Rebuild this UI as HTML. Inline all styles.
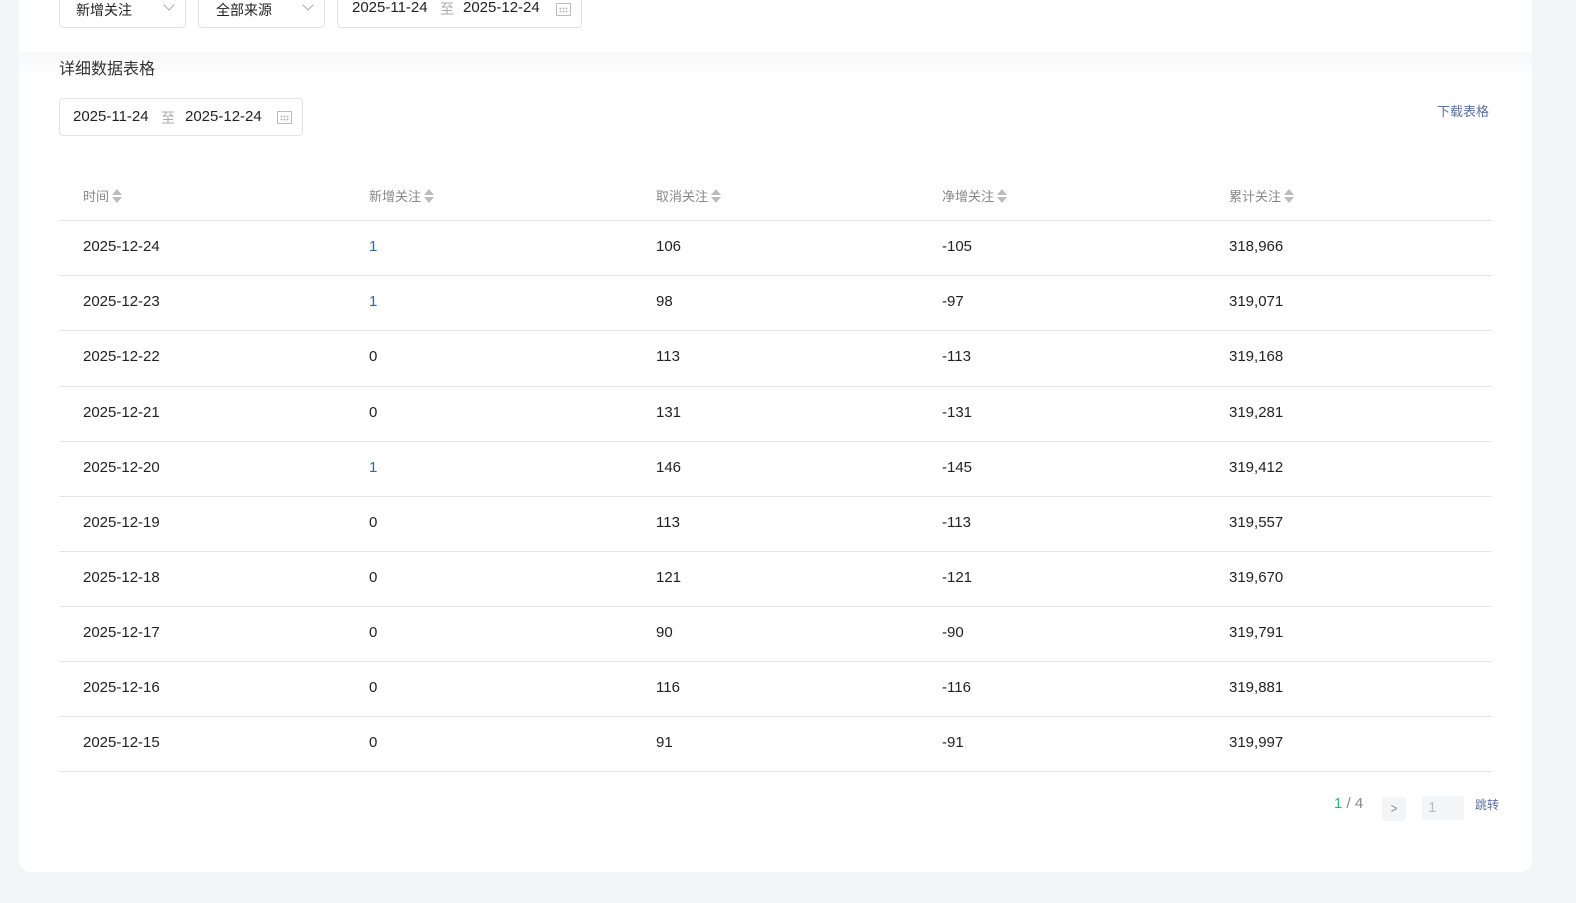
<!DOCTYPE html>
<html><head><meta charset="utf-8">
<style>
*{margin:0;padding:0;box-sizing:border-box}
body{width:1576px;height:903px;background:#f4f5f7;font-family:"Liberation Sans","Noto Sans CJK SC",sans-serif;position:relative;overflow:hidden;color:#222}
.card{position:absolute;left:19px;top:-20px;width:1513px;height:892px;background:#fff;border-radius:0 0 12px 12px}
.band{position:absolute;left:19px;top:52px;width:1513px;height:26px;background:linear-gradient(#f7f7f8,#fff)}
.abs{position:absolute}
.box{position:absolute;border:1px solid #e3e3e6;border-radius:4px;background:#fff;font-size:15px;color:#222}
.chev{position:absolute;width:8px;height:8px;border-right:1.3px solid #aaa;border-bottom:1.3px solid #aaa;transform:rotate(45deg)}
.cal{position:absolute;width:15px;height:13px;border:1.3px solid #bbb;border-radius:1px}
.cal:before{content:"";position:absolute;left:2px;top:3px;width:9px;height:6px;background:radial-gradient(circle,#bbb 0.8px,transparent 1px) 0 0/3px 3px}
.th{position:absolute;top:186px;font-size:13px;color:#888}
.sort{display:inline-block;width:10px;height:15px;vertical-align:-3px;margin-left:3px;position:relative}
.sort:before{content:"";position:absolute;left:0;top:0;border-left:5px solid transparent;border-right:5px solid transparent;border-bottom:6px solid #bbb}
.sort:after{content:"";position:absolute;left:0;top:8px;border-left:5px solid transparent;border-right:5px solid transparent;border-top:6px solid #bbb}
.line{position:absolute;left:59px;width:1433px;height:1px;background:#e6e6e8}
.td{position:absolute;font-size:15px;color:#222;line-height:18px;margin-top:-1px}
.b{color:#2a6cb0}
</style></head><body>
<div class="card"></div>
<div class="band"></div>

<div class="box" style="left:59px;top:-10px;width:127px;height:38px;font-size:14px"><span class="abs" style="left:16px;top:9px">新增关注</span><div class="chev" style="left:105px;top:10px"></div></div>
<div class="box" style="left:198px;top:-10px;width:127px;height:38px;font-size:14px"><span class="abs" style="left:17px;top:9px">全部来源</span><div class="chev" style="left:105px;top:10px"></div></div>
<div class="box" style="left:337px;top:-10px;width:245px;height:38px"><span class="abs" style="left:14px;top:8px">2025-11-24</span><span class="abs" style="left:102px;top:8px;color:#aaa;font-size:14px">至</span><span class="abs" style="left:125px;top:8px">2025-12-24</span><div class="cal" style="left:218px;top:12px"></div></div>

<div class="abs" style="left:59px;top:55px;font-size:16px;color:#333">详细数据表格</div>
<div class="abs" style="left:1437px;top:101px;font-size:13px;color:#5a6fa6">下载表格</div>

<div class="box" style="left:59px;top:98px;width:244px;height:38px"><span class="abs" style="left:13px;top:9px">2025-11-24</span><span class="abs" style="left:101px;top:9px;color:#aaa;font-size:14px">至</span><span class="abs" style="left:125px;top:9px">2025-12-24</span><div class="cal" style="left:217px;top:12px"></div></div>

<div class="th" style="left:83px">时间<span class="sort"></span></div>
<div class="th" style="left:369px">新增关注<span class="sort"></span></div>
<div class="th" style="left:656px">取消关注<span class="sort"></span></div>
<div class="th" style="left:942px">净增关注<span class="sort"></span></div>
<div class="th" style="left:1229px">累计关注<span class="sort"></span></div>

<div class="line" style="top:220px"></div>
<div class="line" style="top:275px"></div>
<div class="line" style="top:330px"></div>
<div class="line" style="top:386px"></div>
<div class="line" style="top:441px"></div>
<div class="line" style="top:496px"></div>
<div class="line" style="top:551px"></div>
<div class="line" style="top:606px"></div>
<div class="line" style="top:661px"></div>
<div class="line" style="top:716px"></div>
<div class="line" style="top:771px"></div>

<div class="td" style="left:83px;top:239px">2025-12-24</div><div class="td b" style="left:369px;top:239px">1</div><div class="td" style="left:656px;top:239px">106</div><div class="td" style="left:942px;top:239px">-105</div><div class="td" style="left:1229px;top:239px">318,966</div>
<div class="td" style="left:83px;top:294px">2025-12-23</div><div class="td b" style="left:369px;top:294px">1</div><div class="td" style="left:656px;top:294px">98</div><div class="td" style="left:942px;top:294px">-97</div><div class="td" style="left:1229px;top:294px">319,071</div>
<div class="td" style="left:83px;top:349px">2025-12-22</div><div class="td" style="left:369px;top:349px">0</div><div class="td" style="left:656px;top:349px">113</div><div class="td" style="left:942px;top:349px">-113</div><div class="td" style="left:1229px;top:349px">319,168</div>
<div class="td" style="left:83px;top:405px">2025-12-21</div><div class="td" style="left:369px;top:405px">0</div><div class="td" style="left:656px;top:405px">131</div><div class="td" style="left:942px;top:405px">-131</div><div class="td" style="left:1229px;top:405px">319,281</div>
<div class="td" style="left:83px;top:460px">2025-12-20</div><div class="td b" style="left:369px;top:460px">1</div><div class="td" style="left:656px;top:460px">146</div><div class="td" style="left:942px;top:460px">-145</div><div class="td" style="left:1229px;top:460px">319,412</div>
<div class="td" style="left:83px;top:515px">2025-12-19</div><div class="td" style="left:369px;top:515px">0</div><div class="td" style="left:656px;top:515px">113</div><div class="td" style="left:942px;top:515px">-113</div><div class="td" style="left:1229px;top:515px">319,557</div>
<div class="td" style="left:83px;top:570px">2025-12-18</div><div class="td" style="left:369px;top:570px">0</div><div class="td" style="left:656px;top:570px">121</div><div class="td" style="left:942px;top:570px">-121</div><div class="td" style="left:1229px;top:570px">319,670</div>
<div class="td" style="left:83px;top:625px">2025-12-17</div><div class="td" style="left:369px;top:625px">0</div><div class="td" style="left:656px;top:625px">90</div><div class="td" style="left:942px;top:625px">-90</div><div class="td" style="left:1229px;top:625px">319,791</div>
<div class="td" style="left:83px;top:680px">2025-12-16</div><div class="td" style="left:369px;top:680px">0</div><div class="td" style="left:656px;top:680px">116</div><div class="td" style="left:942px;top:680px">-116</div><div class="td" style="left:1229px;top:680px">319,881</div>
<div class="td" style="left:83px;top:735px">2025-12-15</div><div class="td" style="left:369px;top:735px">0</div><div class="td" style="left:656px;top:735px">91</div><div class="td" style="left:942px;top:735px">-91</div><div class="td" style="left:1229px;top:735px">319,997</div>

<div class="abs" style="left:1334px;top:795px;font-size:15px;color:#888"><span style="color:#2db37a">1</span> / 4</div>
<div class="abs" style="left:1382px;top:797px;width:24px;height:24px;background:#f4f5f7;border-radius:3px"></div>
<div class="abs" style="left:1382px;top:800px;width:24px;font-size:14px;color:#888;text-align:center;transform:scaleX(0.8)">&gt;</div>
<div class="abs" style="left:1422px;top:796px;width:42px;height:24px;background:#f4f5f7;border-radius:3px;font-size:15px;color:#bbb;padding:3px 0 0 6px">1</div>
<div class="abs" style="left:1475px;top:796px;font-size:12px;color:#5a6fa6">跳转</div>
</body></html>
